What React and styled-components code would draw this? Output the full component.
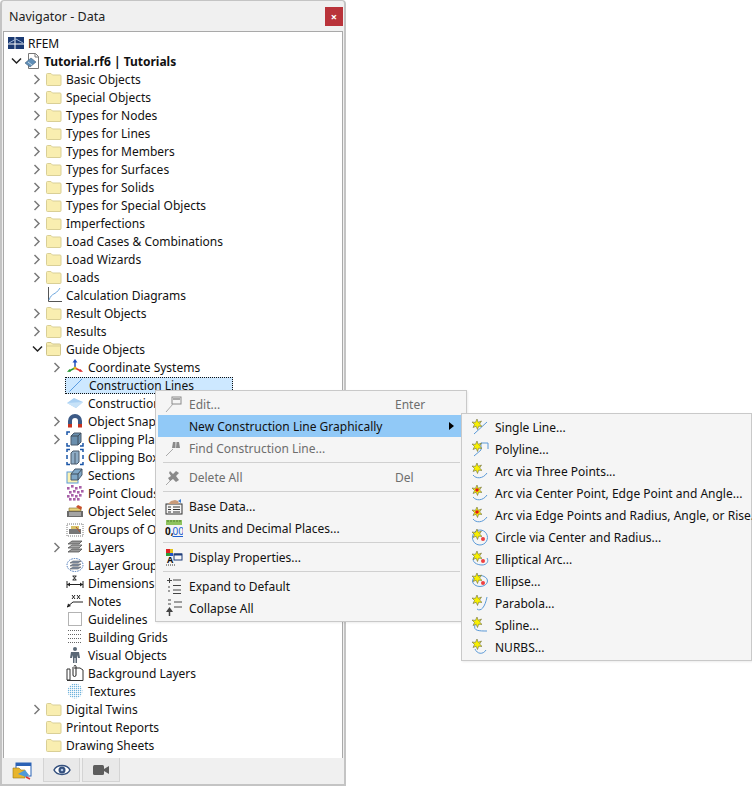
import React from 'react';
import styled, { createGlobalStyle } from 'styled-components';

const Global = createGlobalStyle`
  html, body { margin: 0; padding: 0; background: #fff; }
  body { font-family: "Noto Sans", "Open Sans", sans-serif; font-size: 12px; color: #111; }
  #root { width: 752px; height: 787px; overflow: hidden; }
`;

const Stage = styled.div`position: relative; width: 752px; height: 787px; overflow: hidden; background: #fff;`;
const Win = styled.section`
  width: 346px; height: 786px; box-sizing: border-box; display: flex; flex-direction: column;
  background: #f0f0f0; border: 2px solid #c4c4c4; border-top-width: 1px; border-radius: 4px 4px 0 0;
`;
const TitleBar = styled.header`height: 30px; flex: none; display: flex; align-items: center; justify-content: space-between; padding: 0 1px 0 7px;`;
const Title = styled.h1`margin: 0; font-weight: 400; font-size: 12.5px; color: #222;`;
const Close = styled.button`
  width: 18px; height: 19px; padding: 0; border: 0; background: #b9333a; color: #fff;
  font: 700 11px/18px "Noto Sans", sans-serif; margin-top: 1px;
`;
const Tree = styled.div`flex: 1; min-height: 0; margin: 0 1px; background: #fff; border: 1px solid #a9a9a9; border-bottom: 0; padding-top: 2px; overflow: hidden; box-sizing: border-box;`;
const Row = styled.div`
  height: 18px; display: flex; align-items: center; padding-left: ${p => p.$pad}px; white-space: nowrap;
  font-weight: ${p => p.$bold ? 700 : 400};
`;
const Chev = styled.span`width: 16px; height: 18px; flex: none; margin-right: ${p => p.$gap}px; display: flex; align-items: center; justify-content: center;`;
const IconBox = styled.span`width: 18px; height: 18px; flex: none; display: flex; align-items: center; justify-content: center; margin-right: ${p => p.$gap}px;`;
const Sel = styled.div`
  display: flex; align-items: center; height: 17px; width: 168px; box-sizing: border-box; background: #cde8ff;
  border: 1px dotted #111; padding-left: 1px;
`;
const Tabs = styled.nav`height: 26px; flex: none; display: flex; align-items: flex-start; background: #f0f0f0; padding-left: 41px; gap: 2px; padding-top: 0;`;
const ActiveTab = styled.span`position: absolute; left: 12px; top: 762px; width: 20px; height: 18px;`;
const Tab = styled.button`width: ${p => p.$w}px; height: 24px; padding: 0; border: 1px solid #d4d4d4; border-top: 0; background: #e9e9e9; display: flex; align-items: center; justify-content: center;`;

const Menu = styled.div`
  position: absolute; left: ${p => p.$x}px; top: ${p => p.$y}px; width: ${p => p.$w}px; box-sizing: border-box;
  background: #f5f5f5; border: 1px solid #c9c9c9; padding: 2px 2px 2px 2px; box-shadow: 1px 1px 2px rgba(0,0,0,.08);
`;
const Item = styled.div`
  height: 22px; display: flex; align-items: center; position: relative; white-space: nowrap;
  color: ${p => p.$off ? '#6e6e6e' : '#111'}; background: ${p => p.$hot ? '#91c9f7' : 'transparent'};
`;
const MIcon = styled.span`width: ${p => p.$w}px; height: 22px; flex: none; display: flex; align-items: center; justify-content: center;`;
const Keys = styled.span`position: absolute; left: 237px; color: #6e6e6e;`;
const Arrow = styled.span`position: absolute; right: 10px; top: 7px; width: 0; height: 0; border-left: 5px solid #000; border-top: 4px solid transparent; border-bottom: 4px solid transparent;`;
const Sep = styled.div`height: 1px; background: #d0d0d0; margin: 3px 4px 3px 5px;`;

const S = ({ w = 18, h = 18, children }) => <svg width={w} height={h} viewBox={`0 0 ${w} ${h}`}>{children}</svg>;

const ChevR = () => <svg width="8" height="11" viewBox="0 0 8 11"><path d="M1.5 1l4.5 4.5L1.5 10" fill="none" stroke="#7a7a7a" strokeWidth="1.5"/></svg>;
const ChevD = () => <svg width="11" height="8" viewBox="0 0 11 8"><path d="M1 1.5l4.5 4.5L10 1.5" fill="none" stroke="#222" strokeWidth="1.5"/></svg>;

const Folder = () => <S><path d="M1.5 4.5a1 1 0 0 1 1-1h3.5l1.5 1.5h7.5a1 1 0 0 1 1 1v8.5a1 1 0 0 1-1 1h-12.500a1 1 0 0 1-1-1z" fill="#f9eeb0" stroke="#d9cf96"/></S>;
const FolderOpen = () => <S><path d="M1.5 3.500a1 1 0 0 1 1-1h3.500l1.500 1.500h7a1 1 0 0 1 1 1v9.500a1 1 0 0 1-1 1h-12a1 1 0 0 1-1-1z" fill="#f9eeb0" stroke="#cfc48a"/><path d="M2 6h14" stroke="#d9cf96"/></S>;
const Flag = () => <S w={17} h={14}><rect width="16" height="12" y="1" fill="#1b3a73"/><path d="M0 8h16M7 1v12" stroke="#fff" strokeWidth="1"/><path d="M1 7l7-4 7 4" stroke="#9fb6d8" fill="none"/></S>;
const Doc = () => <S><path d="M4.500 1.500h7l3 3v12h-10z" fill="#fff" stroke="#777"/><path d="M11 1.500v3.500h3.500" fill="none" stroke="#777"/><path d="M1 11l6-5 5 4-6 5z" fill="#5f8fb8" stroke="#465f7a" strokeWidth=".6"/><path d="M4 10l4 3" stroke="#c9dbe9"/></S>;
const Diagram = () => <S><path d="M3.500 1v14.500H17" fill="none" stroke="#555"/><path d="M4 14C7 6 10 10 15 2" fill="none" stroke="#6aa5dd"/></S>;
const Axes = () => <S><path d="M9 10V3" stroke="#1f4fbf" strokeWidth="1.500"/><path d="M9 1l-2.500 3.500h5z" fill="#1f4fbf"/><path d="M9 10l6 3" stroke="#d33" strokeWidth="1.500"/><path d="M17 14l-4-.5 1.500-2.500z" fill="#d33"/><path d="M9 10l-6 3" stroke="#2a9a35" strokeWidth="1.500"/><path d="M1 14l4-.5-1.500-2.500z" fill="#2a9a35"/><circle cx="9" cy="10" r="1.500" fill="#e3b21c"/></S>;
const LineI = () => <S><path d="M2.500 15.500L15 3" stroke="#5a9ce0" fill="none"/></S>;
const Plane = () => <S><path d="M1 9l7-5 9 4-7 6z" fill="#a9d0f3"/><path d="M1 9l9 5 7-6" fill="#c7e2f8"/></S>;
const Magnet = () => <S><path d="M2 15V9a7 7 0 0 1 14 0v6h-4V9a3 3 0 0 0-6 0v6z" fill="#3c5a86"/><rect x="2" y="12" width="4" height="3.500" fill="#c8321f"/><rect x="12" y="12" width="4" height="3.500" fill="#c8321f"/></S>;
const ClipP = () => <S><path d="M1 5V2h3M1 13v3h3M14 16h3v-3" fill="none" stroke="#1a55a8" strokeWidth="1.500"/><path d="M5 6l3-3h7v9l-3 3H5z" fill="#6a8fae" stroke="#4a5a6c"/><path d="M5 6h7v9M12 6l3-3" fill="none" stroke="#3f4c5a"/></S>;
const ClipB = () => <S><path d="M1 4V1.500h3M14 1.500h3V4M1 7v4M17 7v4M1 14v2.500h3M14 16.500h3V14" fill="none" stroke="#1a55a8" strokeWidth="1.500"/><path d="M5 5l2-2h6v11l-2 2H5z" fill="#8eacc5" stroke="#4a5a6c"/><path d="M9 5v11" stroke="#4a5a6c"/></S>;
const Section = () => <S><rect x="1" y="6" width="11" height="11" fill="#fbf2b4" stroke="#5b9ad8"/><path d="M5 8l4-5h7v6l-4 5H5z" fill="#7fa7c6" stroke="#4a5a6c"/><path d="M5 8h7v6M12 8l4-5" fill="none" stroke="#3f4c5a"/></S>;
const Cloud = () => <S>{[[2,4],[6,2],[10,4],[14,3],[4,8],[8,7],[12,8],[16,7],[2,12],[6,11],[10,12],[14,11],[4,15],[8,15],[12,15]].map(([x,y],i)=><rect key={i} x={x-1} y={y-1} width="2.600" height="2.600" fill="#a85fa8"/>)}</S>;
const Select = () => <S><path d="M1 9h16v6H1z" fill="#6a6a6a"/><path d="M3 6h12v3H3z" fill="#e8d27a" stroke="#7a6a30" strokeWidth=".6"/><path d="M3 11h12M3 13h12" stroke="#ddd"/><path d="M10 5l2-2 4 2-1 3z" fill="#c8502a"/></S>;
const Groups = () => <S><path d="M1 4h16v12H1z" fill="none" stroke="#777" strokeDasharray="1 1"/><path d="M3 9h12v5H3z" fill="#777"/><path d="M5 6h8v3H5z" fill="#d9c36a"/><path d="M10 7l4 5" stroke="#b5502a"/></S>;
const Layers = () => <S><path d="M2 6l4-3h10l-3 3z" fill="#9a9a9a" stroke="#444" strokeWidth=".7"/><path d="M2 10l4-3h10l-3 3z" fill="#aaa" stroke="#444" strokeWidth=".7"/><path d="M2 14l4-3h10l-3 3z" fill="#999" stroke="#444" strokeWidth=".7"/></S>;
const LGroups = () => <S><ellipse cx="9" cy="9" rx="8" ry="6.500" fill="none" stroke="#4a78b8" strokeDasharray="1.500 1"/><path d="M4 7l3-2h8l-3 2zM4 10l3-2h8l-3 2zM4 13l3-2h8l-3 2z" fill="#8c9bb0" stroke="#444" strokeWidth=".5"/></S>;
const Dim = () => <S><path d="M1 7v7M17 7v7M1 10.500h16" stroke="#222" fill="none"/><path d="M1 10.500l3-2v4zM17 10.500l-3-2v4z" fill="#222"/><path d="M7 2l3 4M10 2l-3 4M6.500 2h4M6.500 6h4" stroke="#222" strokeWidth=".9"/></S>;
const Notes = () => <S><path d="M1 15l6-5h10" stroke="#222" fill="none"/><path d="M1 15.500l1-4 3 2.500z" fill="#222"/><path d="M6 3l3 4M9 3L6 7M11 3l3 4M14 3l-3 4" stroke="#222"/></S>;
const Guides = () => <S><rect x="2.500" y="2.500" width="13" height="13" fill="none" stroke="#666" strokeDasharray="1 1"/></S>;
const Grid = () => <S><path d="M2 2.500h14M2 6.500h14M2 10.500h14M2 14.500h14" stroke="#666" strokeDasharray="1 1"/></S>;
const Person = () => <S><circle cx="9" cy="3" r="2" fill="#5a6876"/><path d="M5 6h8l1 6h-2l-1-3v8H9.500v-5h-1v5H7V9l-1 3H4z" fill="#5a6876"/></S>;
const BgL = () => <S><path d="M1 5h3v11H1zM1 16.500h16V6l-3-2H8" fill="#fff" stroke="#333"/><path d="M7 3v8a1.500 1.500 0 0 0 3 0V2.500a1 1 0 0 0-2 0" fill="none" stroke="#222"/></S>;
const Texture = () => <S><defs><pattern id="dot" width="2" height="2" patternUnits="userSpaceOnUse"><rect width="1.200" height="1.200" fill="#6fb3dc"/></pattern></defs><circle cx="9" cy="9" r="7.500" fill="url(#dot)"/></S>;

const Edit = () => <S w={18} h={18}><rect x="7" y="2" width="9" height="7" fill="#f5f5f5" stroke="#8a8a8a"/><rect x="8" y="3" width="7" height="2" fill="#a8a8a8"/><path d="M1 17l7-8" stroke="#aaa"/></S>;
const FindI = () => <S><path d="M1 17l7-7" stroke="#aaa"/><path d="M7 9l1-6h2.500v6zM11 9l.5-6H14l1 6z" fill="#8a8a8a"/></S>;
const Del = () => <S><path d="M1 17l7-7" stroke="#aaa"/><path d="M5 3l3 3 3-3 3 2-3 3 3 4-3 2-3-3-3 2-2-3 3-2-2-3z" fill="#8a8a8a"/></S>;
const Base = () => <S><rect x="1" y="7" width="16" height="10" fill="#f5f5f5" stroke="#333"/><path d="M3 10h3M8 10h7M3 12.500h3M8 12.500h7M3 15h3M8 15h7" stroke="#333"/><path d="M3 7l3-3 4-1 3 1 1 3z" fill="#c79a7a"/><path d="M13 4l3-2v4z" fill="#3b7bd0"/></S>;
const Units = () => <S w={18} h={18}><rect x="1" y="1" width="16" height="5" fill="#8fc35d"/><path d="M3 1v2M6 1v2M9 1v2M12 1v2M15 1v2" stroke="#4f7e2c"/><text x="0" y="16" fontFamily="Noto Sans" fontWeight="700" fontSize="10" fill="#111">0,</text><text x="7.500" y="16" fontFamily="Noto Sans" fontSize="10" fill="#1d5fd0" textDecoration="underline">00</text></S>;
const Disp = () => <S><rect x="1" y="1" width="4" height="4" fill="#d22"/><rect x="5" y="1" width="3" height="4" fill="#e2c21a"/><rect x="1" y="5" width="4" height="3" fill="#2a9a35"/><rect x="5" y="5" width="3" height="3" fill="#2255c8"/><rect x="9" y="6" width="8" height="6" fill="#f5f5f5" stroke="#1f3d7a"/><path d="M9 6.500h8" stroke="#1f3d7a" strokeWidth="2"/><text x="2" y="15" fontFamily="Noto Sans" fontWeight="700" fontSize="9" fill="#111">A</text><path d="M1 17h9" stroke="#333" strokeDasharray="1 1"/></S>;
const Expand = () => <S><path d="M2 3.500h5M4.500 1v5M8 3h8M8 8.500h8M8 13h8M8 16.500h8M3 10h2M3 14h2" stroke="#444"/></S>;
const Collapse = () => <S><path d="M3 1h3M3 5h3M9 3h8M9 8h8" stroke="#444"/><path d="M4.500 17V11" stroke="#444" strokeWidth="1.500"/><path d="M4.500 8l-3.500 5h7z" fill="#444"/></S>;

const Star = ({ red }) => <><path d="M6 1l1.200 3.300L10.500 3 8.600 6l2.400 2.400-3.300-.2L6.500 11.500 5.200 8.300 2 9.500l1.500-3L1 4l3.400.4z" fill="#f8f000" stroke="#6b6b44" strokeWidth=".6"/>{red && <circle cx="6" cy="6" r="1.800" fill="#e01818"/>}</>;
const Sub = ({ d, red, dot }) => <S><path d={d} fill="none" stroke="#5b9ad8"/>{dot && <circle cx="12" cy="11" r="2" fill="#ef4040"/>}<Star red={red}/></S>;

const Tab1 = () => <svg width="20" height="18" viewBox="0 0 20 18"><rect x="4" y="1" width="15" height="13" fill="#fff" stroke="#2b62b5"/><rect x="4" y="1" width="15" height="3" fill="#2b62b5"/><path d="M1 6h6l2 2h4v8H1z" fill="#e8b52c" stroke="#9a7a1a" strokeWidth=".6"/><path d="M6 12l7-4 4 5-3 2z" fill="#4f9ad8"/><path d="M14 15l4 2" stroke="#d33" strokeWidth="1.500"/></svg>;
const Eye = () => <svg width="18" height="12" viewBox="0 0 18 12"><path d="M1 6c3-6 13-6 16 0-3 6-13 6-16 0z" fill="#fff" stroke="#34507e" strokeWidth="1.500"/><circle cx="9" cy="6" r="3.500" fill="#34507e"/><circle cx="9" cy="6" r="1.300" fill="#b5c8e6"/></svg>;
const Cam = () => <svg width="16" height="12" viewBox="0 0 16 12"><rect x="0" y="1" width="11" height="10" rx="1.500" fill="#5d5d5d"/><path d="M11 5l5-3v8l-5-3z" fill="#5d5d5d"/></svg>;

const L0 = [['Basic Objects',1],['Special Objects',1],['Types for Nodes',1],['Types for Lines',1],['Types for Members',1],['Types for Surfaces',1],['Types for Solids',1],['Types for Special Objects',1],['Imperfections',1],['Load Cases & Combinations',1],['Load Wizards',1],['Loads',1]];
const L2a = [[Plane,'Construction Planes',0],[Magnet,'Object Snaps',1],[ClipP,'Clipping Planes',1],[ClipB,'Clipping Boxes',0],[Section,'Sections',0],[Cloud,'Point Clouds',0],[Select,'Object Selections',0],[Groups,'Groups of Objects',0],[Layers,'Layers',1],[LGroups,'Layer Groups',0],[Dim,'Dimensions',0],[Notes,'Notes',0],[Guides,'Guidelines',0],[Grid,'Building Grids',0],[Person,'Visual Objects',0],[BgL,'Background Layers',0],[Texture,'Textures',0]];

const Level1 = ({ label, chev, icon: I = Folder }) => (
  <Row $pad={25}><Chev $gap={0}>{chev ? <ChevR/> : null}</Chev><IconBox $gap={3}><I/></IconBox>{label}</Row>
);
const Level2 = ({ label, chev, icon: I }) => (
  <Row $pad={45}><Chev $gap={1}>{chev ? <ChevR/> : null}</Chev><IconBox $gap={4}><I/></IconBox>{label}</Row>
);

const subs = [
  ['Single Line...', 'M3 16L16 4'],
  ['Polyline...', 'M3 16l7-6V3h7v6'],
  ['Arc via Three Points...', 'M2 13c3 4 10 4 14-2'],
  ['Arc via Center Point, Edge Point and Angle...', 'M2 13c3 4 10 4 14-2', 1],
  ['Arc via Edge Points and Radius, Angle, or Rise...', 'M2 13c3 4 10 4 14-2', 1],
  ['Circle via Center and Radius...', 'M9 2a7.500 7.500 0 1 1-.1 0', 0, 1],
  ['Elliptical Arc...', 'M3 7c-3 5 3 8 8 8s7-4 5-7', 0, 1],
  ['Ellipse...', 'M1.500 9a7.500 5.500 0 1 0 15 0a7.500 5.500 0 1 0-15 0', 0, 1],
  ['Parabola...', 'M6 15c4 3 8-2 10-12'],
  ['Spline...', 'M4 9c-2 6 4 6 12 6'],
  ['NURBS...', 'M4 11c2 5 8 6 11 1'],
];

export default function App() {
  return (
    <Stage>
      <Global/>
      <Win>
        <TitleBar><Title>Navigator - Data</Title><Close>×</Close></TitleBar>
        <Tree>
          <Row $pad={3}><IconBox $gap={3}><Flag/></IconBox>RFEM</Row>
          <Row $pad={4} $bold><Chev $gap={0}><ChevD/></Chev><IconBox $gap={2}><Doc/></IconBox>Tutorial.rf6 | Tutorials</Row>
          {L0.map(([l, c]) => <Level1 key={l} label={l} chev={c}/>)}
          <Level1 label="Calculation Diagrams" icon={Diagram}/>
          <Level1 label="Result Objects" chev/>
          <Level1 label="Results" chev/>
          <Row $pad={25}><Chev $gap={0}><ChevD/></Chev><IconBox $gap={3}><FolderOpen/></IconBox>Guide Objects</Row>
          <Level2 label="Coordinate Systems" chev icon={Axes}/>
          <Row $pad={61}><Sel><IconBox $gap={4}><LineI/></IconBox>Construction Lines</Sel></Row>
          {L2a.map(([I, l, c]) => <Level2 key={l} label={l} chev={c} icon={I}/>)}
          <Level1 label="Digital Twins" chev/>
          <Level1 label="Printout Reports"/>
          <Level1 label="Drawing Sheets"/>
        </Tree>
        <Tabs><Tab $w={37}><Eye/></Tab><Tab $w={38}><Cam/></Tab></Tabs>
      </Win>
      <ActiveTab><Tab1/></ActiveTab>

      <Menu $x={155} $y={390} $w={312}>
        <Item $off><MIcon $w={31}><Edit/></MIcon>Edit...<Keys>Enter</Keys></Item>
        <Item $hot><MIcon $w={31}/>New Construction Line Graphically<Arrow/></Item>
        <Item $off><MIcon $w={31}><FindI/></MIcon>Find Construction Line...</Item>
        <Sep/>
        <Item $off><MIcon $w={31}><Del/></MIcon>Delete All<Keys>Del</Keys></Item>
        <Sep/>
        <Item><MIcon $w={31}><Base/></MIcon>Base Data...</Item>
        <Item><MIcon $w={31}><Units/></MIcon>Units and Decimal Places...</Item>
        <Sep/>
        <Item><MIcon $w={31}><Disp/></MIcon>Display Properties...</Item>
        <Sep/>
        <Item><MIcon $w={31}><Expand/></MIcon>Expand to Default</Item>
        <Item><MIcon $w={31}><Collapse/></MIcon>Collapse All</Item>
      </Menu>

      <Menu $x={461} $y={413} $w={291}>
        {subs.map(([l, d, r, dot]) => <Item key={l}><MIcon $w={31}><Sub d={d} red={r} dot={dot}/></MIcon>{l}</Item>)}
      </Menu>
    </Stage>
  );
}
